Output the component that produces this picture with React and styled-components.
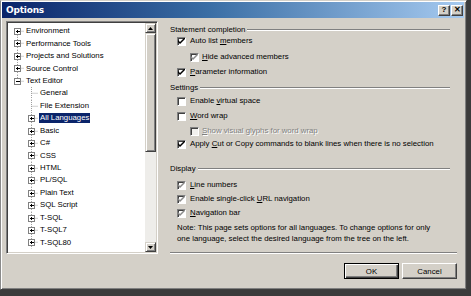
import React from 'react';
import styled, { createGlobalStyle } from 'styled-components';

const GlobalStyle = createGlobalStyle`
  html, body {
    margin: 0;
    padding: 0;
    background: #3b3b3b;
  }
  body {
    font-family: "Liberation Sans", Arial, sans-serif;
    font-size: 7.8px;
    color: #000;
  }
`;

const Dialog = styled.div`
  width: 467px;
  height: 290px;
  box-sizing: border-box;
  background: #d4d0c8;
  border-top: 1px solid #d4d0c8;
  border-left: 1px solid #8a8a8a;
  border-right: 1px solid #404040;
  border-bottom: 1px solid #404040;
  box-shadow: inset 1px 1px 0 #fff, inset -1px -1px 0 #808080;
  padding: 1px 2px 2px 1px;
  display: flex;
  flex-direction: column;
`;

const TitleBar = styled.div`
  height: 16px;
  background: linear-gradient(to right, #0a246a 0%, #3a6ea5 45%, #a6caf0 100%);
  display: flex;
  align-items: center;
  justify-content: space-between;
  padding: 0 1px 0 4px;
`;

const Title = styled.span`
  color: #fff;
  font-weight: bold;
  font-size: 9px;
  font-family: "DejaVu Sans", sans-serif;
  letter-spacing: -0.2px;
`;

const TitleButtons = styled.div`
  display: flex;
  gap: 1px;
`;

const CaptionButton = styled.div`
  width: 12px;
  height: 11px;
  box-sizing: border-box;
  background: #d4d0c8;
  border-top: 1px solid #fff;
  border-left: 1px solid #fff;
  border-right: 1px solid #404040;
  border-bottom: 1px solid #404040;
  box-shadow: inset -1px -1px 0 #808080;
  display: flex;
  align-items: center;
  justify-content: center;
  font-weight: bold;
  font-size: 8px;
  line-height: 1;
`;

const Body = styled.div`
  flex: 1;
  display: flex;
  padding: 3px 0 0 4px;
  gap: 12px;
`;

const TreePanel = styled.div`
  width: 152px;
  height: 233px;
  box-sizing: border-box;
  border-top: 1px solid #808080;
  border-left: 1px solid #808080;
  border-right: 1px solid #fff;
  border-bottom: 1px solid #fff;
  box-shadow: inset 1px 1px 0 #404040, inset -1px -1px 0 #d4d0c8;
  padding: 1px;
  display: flex;
  background: #fff;
`;

const TreeList = styled.div`
  flex: 1;
  padding: 2px 0 0 1px;
  overflow: hidden;
`;

const TreeRow = styled.div`
  height: 12.45px;
  display: flex;
  align-items: center;
  white-space: nowrap;
  line-height: 10px;
`;

const TreeLabel = styled.span`
  padding: 0 1px;
  margin-left: -1px;
  background: ${p => (p.$selected ? '#0a246a' : 'transparent')};
  color: ${p => (p.$selected ? '#fff' : '#000')};
`;

const ScrollBar = styled.div`
  width: 11px;
  display: flex;
  flex-direction: column;
  background: #eeedea;
`;

const ScrollButton = styled.div`
  height: 10px;
  box-sizing: border-box;
  background: #d4d0c8;
  border-top: 1px solid #d4d0c8;
  border-left: 1px solid #d4d0c8;
  border-right: 1px solid #404040;
  border-bottom: 1px solid #404040;
  box-shadow: inset 1px 1px 0 #fff, inset -1px -1px 0 #808080;
  display: flex;
  align-items: center;
  justify-content: center;
`;

const ScrollThumb = styled(ScrollButton)`
  height: 119px;
`;

const ScrollTrack = styled.div`
  flex: 1;
`;

const RightColumn = styled.div`
  width: 287px;
  display: flex;
  flex-direction: column;
`;

const GroupHeading = styled.div`
  display: flex;
  align-items: center;
  height: 10px;
  line-height: 10px;
  margin-top: ${p => p.$mt}px;
  margin-right: 7px;
  gap: 2px;
  &::after {
    content: '';
    flex: 1;
    height: 0;
    border-top: 1px solid #808080;
    border-bottom: 1px solid #fff;
  }
`;

const CheckRow = styled.label`
  display: flex;
  align-items: center;
  height: 10px;
  line-height: 10px;
  margin-top: ${p => p.$mt}px;
  padding-left: ${p => (p.$level === 2 ? 20 : 7)}px;
  gap: ${p => (p.$level === 2 ? 3 : 4)}px;
  white-space: nowrap;
  color: ${p => (p.$disabled ? '#808080' : '#000')};
  text-shadow: ${p => (p.$disabled ? '1px 1px 0 #fff' : 'none')};
`;

const Box = styled.span`
  width: 9px;
  height: 9px;
  box-sizing: border-box;
  flex: none;
  background: ${p => (p.$disabled ? '#f2f1ee' : '#fff')};
  border-top: 1px solid #808080;
  border-left: 1px solid #808080;
  border-right: 1px solid #fff;
  border-bottom: 1px solid #fff;
  box-shadow: inset 1px 1px 0 #404040;
  display: flex;
  align-items: center;
  justify-content: center;
`;

const Note = styled.div`
  margin-top: 4px;
  padding-left: 7px;
  line-height: 11px;
  white-space: nowrap;
`;

const Separator = styled.div`
  margin-top: 8px;
  border-top: 1px solid #808080;
  border-bottom: 1px solid #fff;
`;

const Footer = styled.div`
  margin-top: 9px;
  display: flex;
  justify-content: flex-end;
  gap: 3px;
`;

const Button = styled.button`
  width: 55px;
  height: 16px;
  box-sizing: border-box;
  padding: 0;
  font-family: inherit;
  font-size: 7.8px;
  color: #000;
  background: #d4d0c8;
  border-top: 1px solid ${p => (p.$default ? '#000' : '#fff')};
  border-left: 1px solid ${p => (p.$default ? '#000' : '#fff')};
  border-right: 1px solid ${p => (p.$default ? '#000' : '#404040')};
  border-bottom: 1px solid ${p => (p.$default ? '#000' : '#404040')};
  box-shadow: ${p =>
    p.$default
      ? 'inset 1px 1px 0 #fff, inset -1px -1px 0 #404040, inset -2px -2px 0 #808080'
      : 'inset -1px -1px 0 #808080'};
`;

const Check = ({ color }) => (
  <svg width="7" height="7" viewBox="0 0 7 7">
    <path d="M0 2 L0 4 L2 6 L7 1 L7 -1 L2 4 Z" fill={color} />
  </svg>
);

const CheckBox = ({ state, disabled }) => (
  <Box $disabled={disabled}>
    {state === 'on' && <Check color="#000" />}
    {state === 'gray' && <Check color="#8a8a8a" />}
  </Box>
);

const Arrow = ({ down }) => (
  <svg width="5" height="3" viewBox="0 0 5 3">
    <path d={down ? 'M0 0 H5 L2.5 3 Z' : 'M0 3 H5 L2.5 0 Z'} fill="#000" />
  </svg>
);

// tree glyph: dotted connectors plus +/- box
const TreeGlyph = ({ level, expander, first, lastRoot }) => {
  const w = level === 0 ? 15 : 29;
  const h = 12.45;
  const c = 6.25;
  const rootX = 8.5;
  const childX = 22.5;
  const ex = level === 0 ? rootX : childX;
  const dot = { stroke: '#a0a0a0', strokeWidth: 1, strokeDasharray: '1 1' };
  return (
    <svg width={w} height={h} style={{ flex: 'none', marginRight: 2 }}>
      {level === 0 && (
        <line x1={rootX} x2={rootX} y1={first ? c : 0} y2={lastRoot ? c : h} {...dot} />
      )}
      {level === 0 && lastRoot && <line x1={childX} x2={childX} y1={c + 3} y2={h} {...dot} />}
      {level === 1 && <line x1={childX} x2={childX} y1={0} y2={h} {...dot} />}
      <line x1={ex} x2={w} y1={c} y2={c} {...dot} />
      {expander && (
        <g shapeRendering="crispEdges">
          <rect x={ex - 3} y={c - 3} width="6" height="6" fill="#fff" stroke="#808080" />
          <line x1={ex - 1.5} x2={ex + 2} y1={c} y2={c} stroke="#000" />
          {expander === 'plus' && <line x1={ex} x2={ex} y1={c - 1.5} y2={c + 2} stroke="#000" />}
        </g>
      )}
    </svg>
  );
};

const tree = [
  { label: 'Environment', level: 0, expander: 'plus' },
  { label: 'Performance Tools', level: 0, expander: 'plus' },
  { label: 'Projects and Solutions', level: 0, expander: 'plus' },
  { label: 'Source Control', level: 0, expander: 'plus' },
  { label: 'Text Editor', level: 0, expander: 'minus', lastRoot: true },
  { label: 'General', level: 1 },
  { label: 'File Extension', level: 1 },
  { label: 'All Languages', level: 1, expander: 'plus', selected: true },
  { label: 'Basic', level: 1, expander: 'plus' },
  { label: 'C#', level: 1, expander: 'plus' },
  { label: 'CSS', level: 1, expander: 'plus' },
  { label: 'HTML', level: 1, expander: 'plus' },
  { label: 'PL/SQL', level: 1, expander: 'plus' },
  { label: 'Plain Text', level: 1, expander: 'plus' },
  { label: 'SQL Script', level: 1, expander: 'plus' },
  { label: 'T-SQL', level: 1, expander: 'plus' },
  { label: 'T-SQL7', level: 1, expander: 'plus' },
  { label: 'T-SQL80', level: 1, expander: 'plus' },
];

export default function App() {
  return (
    <>
      <GlobalStyle />
      <Dialog>
        <TitleBar>
          <Title>Options</Title>
          <TitleButtons>
            <CaptionButton>?</CaptionButton>
            <CaptionButton>✕</CaptionButton>
          </TitleButtons>
        </TitleBar>
        <Body>
          <TreePanel>
            <TreeList>
              {tree.map((t, i) => (
                <TreeRow key={t.label}>
                  <TreeGlyph
                    level={t.level}
                    expander={t.expander}
                    first={i === 0}
                    lastRoot={t.lastRoot}
                  />
                  <TreeLabel $selected={t.selected}>{t.label}</TreeLabel>
                </TreeRow>
              ))}
            </TreeList>
            <ScrollBar>
              <ScrollButton><Arrow /></ScrollButton>
              <ScrollThumb />
              <ScrollTrack />
              <ScrollButton><Arrow down /></ScrollButton>
            </ScrollBar>
          </TreePanel>
          <RightColumn>
            <GroupHeading $mt={4}>Statement completion</GroupHeading>
            <CheckRow $mt={1} $level={1}>
              <CheckBox state="on" />
              <span>Auto list <u>m</u>embers</span>
            </CheckRow>
            <CheckRow $mt={6} $level={2}>
              <CheckBox state="gray" />
              <span><u>H</u>ide advanced members</span>
            </CheckRow>
            <CheckRow $mt={5} $level={1}>
              <CheckBox state="on" />
              <span><u>P</u>arameter information</span>
            </CheckRow>
            <GroupHeading $mt={6}>Settings</GroupHeading>
            <CheckRow $mt={3} $level={1}>
              <CheckBox state="off" />
              <span>Enable <u>v</u>irtual space</span>
            </CheckRow>
            <CheckRow $mt={5} $level={1}>
              <CheckBox state="off" />
              <span><u>W</u>ord wrap</span>
            </CheckRow>
            <CheckRow $mt={5} $level={2} $disabled>
              <CheckBox state="off" disabled />
              <span><u>S</u>how visual glyphs for word wrap</span>
            </CheckRow>
            <CheckRow $mt={3} $level={1}>
              <CheckBox state="on" />
              <span>Apply <u>C</u>ut or Copy commands to blank lines when there is no selection</span>
            </CheckRow>
            <GroupHeading $mt={15}>Display</GroupHeading>
            <CheckRow $mt={6} $level={1}>
              <CheckBox state="gray" />
              <span><u>L</u>ine numbers</span>
            </CheckRow>
            <CheckRow $mt={4} $level={1}>
              <CheckBox state="gray" />
              <span>Enable single-click <u>U</u>RL navigation</span>
            </CheckRow>
            <CheckRow $mt={4} $level={1}>
              <CheckBox state="gray" />
              <span><u>N</u>avigation bar</span>
            </CheckRow>
            <Note>
              Note: This page sets options for all languages. To change options for only
              <br />
              one language, select the desired language from the tree on the left.
            </Note>
            <Separator />
            <Footer>
              <Button $default>OK</Button>
              <Button>Cancel</Button>
            </Footer>
          </RightColumn>
        </Body>
      </Dialog>
    </>
  );
}
